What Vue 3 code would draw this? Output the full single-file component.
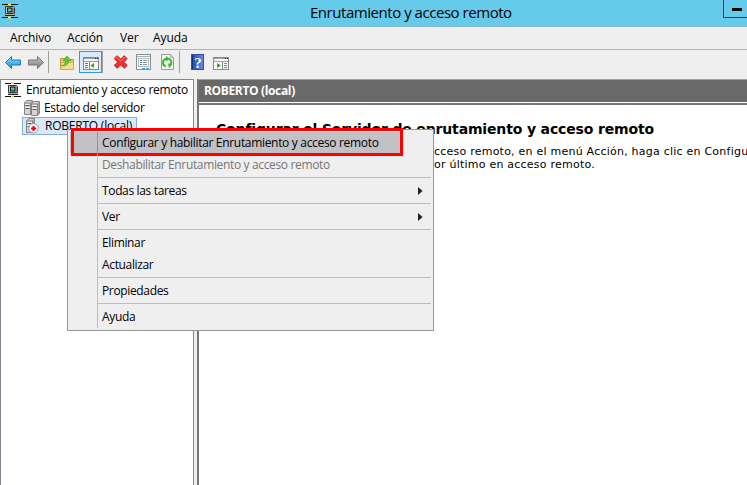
<script setup>
const menus = [
  { label: 'Archivo', cls: 'archivo' },
  { label: 'Acción', cls: 'accion' },
  { label: 'Ver', cls: 'ver' },
  { label: 'Ayuda', cls: 'ayuda' },
]
const groups = [
  [
    { label: 'Configurar y habilitar Enrutamiento y acceso remoto', active: true },
    { label: 'Deshabilitar Enrutamiento y acceso remoto', disabled: true },
  ],
  [{ label: 'Todas las tareas', sub: true }],
  [{ label: 'Ver', sub: true }],
  [{ label: 'Eliminar' }, { label: 'Actualizar' }],
  [{ label: 'Propiedades' }],
  [{ label: 'Ayuda' }],
]
</script>

<template>
  <div class="window">
    <svg width="0" height="0" class="defs">
      <defs>
        <linearGradient id="blue" x2="0" y2="1"><stop stop-color="#9be4ff" /><stop offset=".5" stop-color="#4bbcf3" /><stop offset="1" stop-color="#138bd8" /></linearGradient>
        <linearGradient id="gray" x2="0" y2="1"><stop stop-color="#c4c4c4" /><stop offset="1" stop-color="#808080" /></linearGradient>
        <linearGradient id="help"><stop stop-color="#2345a8" /><stop offset=".25" stop-color="#2f59c4" /><stop offset="1" stop-color="#688be2" /></linearGradient>
        <symbol id="net" viewBox="0 0 16 16">
          <path d="M0 1.500h16M0 14.500h16" stroke="#111" />
          <path d="M6 .5h3v2H6zM6 13.500h3v2H6z" fill="#efe23a" />
          <path d="M3.500 3.500h8l1 1v6h-9z" fill="#d4d4d4" stroke="#333" />
          <rect x="5.500" y="5" width="4.500" height="4" fill="#42c8ba" stroke="#000" />
          <path d="M11.500 4.500v6" stroke="#888" />
          <path d="M3 11.500h10" stroke="#aaa" />
          <path d="M3 12.500h10" stroke="#222" />
        </symbol>
        <symbol id="tower" viewBox="0 0 9 15">
          <path d="M.5 2.500 3 .5h5.500v12l-2 2h-6z" fill="#d5d5d5" stroke="#858585" />
          <path d="M1 3h5.500v11.500M6.500 3l2-2" fill="none" stroke="#858585" />
          <path d="M1.500 5.500h4M1.500 8.500h4" stroke="#555" />
          <path d="M1.500 4.500h4M1.500 7.500h4" stroke="#fff" />
          <path d="M7.500 3v10" stroke="#aaa" />
        </symbol>
      </defs>
    </svg>

    <header class="title">
      <svg class="title-icon" width="16" height="16"><use href="#net" /></svg>
      <span class="title-text">Enrutamiento y acceso remoto</span>
      <div class="minimize"><i></i></div>
    </header>

    <nav class="menubar">
      <span v-for="m in menus" :key="m.cls" :class="m.cls">{{ m.label }}</span>
    </nav>

    <div class="toolbar">
      <svg width="243" height="29" viewBox="0 50 243 29">
        <path d="M5.500 62.500l6-6v3.500h9v5h-9v3.500z" fill="url(#blue)" stroke="#2877a8" />
        <path d="M43.500 62.500l-6-6v3.500h-9v5h9v3.500z" fill="url(#gray)" stroke="#777" />
        <path d="M48.500 51v22M102.500 51v22M179.500 51v22" stroke="#a0a0a0" />

        <path d="M60.500 58.500h5l1 1h7v10h-13z" fill="#ecc866" stroke="#c39a43" />
        <path d="M61 62.500h12.500v7H61z" fill="#f7dc8d" stroke="#d4ad54" />
        <path d="M61.500 65.500c3 0 4-2 4-5H63l4-4.500 4 4.500h-2.500c0 4-2.500 6-7 5z" fill="#5ccc35" stroke="#3c9b25" stroke-width=".6" />

        <rect x="79.500" y="51.500" width="22" height="21" fill="#d9ebfa" stroke="#3399df" />
        <rect x="83.500" y="57.500" width="15" height="12" fill="#f7f7f7" stroke="#7e8792" />
        <path d="M84 58.500h14M84 61.500h14" stroke="#9ba4ae" />
        <path d="M95 58.500h1M97 58.500h1" stroke="#333" />
        <path d="M89.500 62v7" stroke="#7e8792" />
        <path d="M85 63.500h3M85 65.500h3M85 67.500h3" stroke="#4881b2" />
        <path d="M94 63v5l-3.500-2.500z" fill="#38a71c" />

        <path d="M115.500 57l10.500 10M126 57l-10.500 10" stroke="#c42020" stroke-width="4.800" />
        <path d="M115.500 57l10.500 10M126 57l-10.500 10" stroke="#ee3030" stroke-width="3.200" />
        <path d="M115.500 56.500l5.300 4.500 5-4.500" fill="none" stroke="#f68b7b" />

        <rect x="136.500" y="54.500" width="14" height="15" fill="#f9f9f9" stroke="#8a8f96" />
        <path d="M137 56.500h13" stroke="#a8b0b8" />
        <rect x="138.500" y="58.500" width="10" height="8" fill="#fff" stroke="#b8bcc2" />
        <path d="M140 60.500h2M140 62.500h2M140 64.500h2" stroke="#4481b6" />
        <path d="M143 60.500h4M143 62.500h4M143 64.500h4" stroke="#8d9297" />
        <path d="M142 68.500h3M146 68.500h3" stroke="#32a3df" />

        <path d="M161.500 54.500h9l3 3v12h-12z" fill="#fafafa" stroke="#999" />
        <path d="M170.500 54.500v3h3" fill="#ddd" stroke="#aaa" />
        <path d="M165.800 66.500a4 4 0 0 1 1-7.800M168.800 58.700a4 4 0 0 1 1 7" fill="none" stroke="#37b92b" stroke-width="2" />
        <path d="M166 56l4 2.700-4 2.800z" fill="#37b92b" />
        <path d="M168 63.500h4.500l-3.500 5z" fill="#37b92b" />

        <rect x="191.500" y="54.500" width="12" height="15" fill="url(#help)" stroke="#3451a0" />
        <path d="M192.500 55v14" stroke="#18327f" />
        <text x="194.200" y="67.500" class="question">?</text>

        <rect x="213.500" y="57.500" width="15" height="12" fill="#f9f9f9" stroke="#858a90" />
        <path d="M214 58.500h14M214 61.500h14" stroke="#9ba1a8" />
        <path d="M225 58.500h1M227 58.500h1" stroke="#333" />
        <path d="M222.500 62v7" stroke="#858a90" />
        <path d="M217 63v5l4-2.500z" fill="#38a71c" />
        <path d="M224 63.500h3M224 65.500h3M224 67.500h3" stroke="#858a90" />
      </svg>
    </div>

    <main class="body">
      <aside class="tree">
        <div class="node root"><svg width="16" height="16"><use href="#net" /></svg><span>Enrutamiento y acceso remoto</span></div>
        <div class="node status">
          <svg width="17" height="16"><use href="#tower" x="0" y="0" width="9" height="15" /><use href="#tower" x="7" y="1" width="9" height="15" /></svg>
          <span>Estado del servidor</span>
        </div>
        <div class="node local">
          <svg width="15" height="16">
            <use href="#tower" x="1" y="0" width="9" height="15" />
            <circle cx="8.500" cy="10.200" r="4.700" fill="#fff" stroke="#999" />
            <path d="M8.500 8v5M6 10.500h5" stroke="#e00" stroke-width="2" />
          </svg>
          <span>ROBERTO (local)</span>
        </div>
      </aside>
      <div class="splitter"></div>
      <section class="detail">
        <h2>ROBERTO (local)</h2>
        <article>
          <h1>Configurar el Servidor de enrutamiento y acceso remoto</h1>
          <p><span class="line-one">cceso remoto, en el menú Acción, haga clic en Configu</span><span class="line-two">or último en acceso remoto.</span></p>
        </article>
      </section>
    </main>

    <div class="context">
      <div v-for="(g, gi) in groups" :key="gi" class="group">
        <div v-for="item in g" :key="item.label" class="item" :class="{ active: item.active, disabled: item.disabled }">
          <span>{{ item.label }}</span>
          <svg v-if="item.sub" width="5" height="8"><path d="M0 0l4.500 4-4.500 4z" fill="#222" /></svg>
        </div>
      </div>
    </div>
    <div class="marker"></div>
  </div>
</template>

<style>
body { margin: 0; overflow: hidden; }
</style>

<style scoped>
* { box-sizing: border-box; }
.window { position: relative; width: 747px; height: 485px; overflow: hidden; display: flex; flex-direction: column; background: #efefef; color: #000; font: 12px/16px "Open Sans", sans-serif; }
.defs { position: absolute; }
svg { display: block; flex: none; }
.title { height: 27px; flex: none; display: flex; background: #66caea; border-bottom: 1px solid #8bb5c8; position: relative; }
.title-icon { margin: 3px 0 0 2px; }
.title-text { margin-left: 292px; font-size: 15px; line-height: 24px; letter-spacing: -0.46px; white-space: nowrap; }
.minimize { position: absolute; right: -1px; top: -1px; width: 25px; height: 19px; border: 1px solid #27424c; display: flex; }
.minimize i { width: 10px; height: 3px; margin: 8px 0 0 8px; background: #000; }
.menubar { height: 23px; flex: none; border-bottom: 1px solid #b3b3b7; display: flex; padding: 3px 0 0 10px; }
.menubar span { letter-spacing: -0.1px; white-space: nowrap; }
.archivo { width: 57px; }
.accion { width: 53px; }
.ver { width: 33px; }
.toolbar { height: 29px; flex: none; background: #efefef; }
.question { font: bold 15px "Liberation Serif", serif; fill: #fff; }
.body { flex: 1; min-height: 0; display: flex; }
.tree { width: 194px; flex: none; border: 1px solid #828790; border-bottom: 0; background: #fff; padding-top: 1px; }
.node { display: flex; height: 18px; align-items: center; white-space: nowrap; }
.node span { letter-spacing: -0.35px; }
.root { padding-left: 4px; gap: 5px; }
.status { padding-left: 23px; gap: 4px; }
.status span { margin-left: -1px; }
.local { margin-left: 21px; width: 115px; border: 1px solid #84acdd; background: #d9e8fb; padding-left: 2px; gap: 5px; }
.local span { letter-spacing: -0.22px; }
.splitter { width: 3px; flex: none; background: #efefef; }
.detail { flex: 1; min-width: 0; border-left: 2px solid #777; border-top: 1px solid #a0a0a0; background: #fff; }
h2 { margin: 0; height: 22px; background: #696969; color: #fff; font-size: 12px; line-height: 22px; padding-left: 5px; letter-spacing: -0.35px; }
article { margin-top: 1px; border-top: 2px solid #777; padding: 16px 0 0 17px; font-family: "DejaVu Sans", sans-serif; white-space: nowrap; }
h1 { margin: 0; font-size: 14px; line-height: 17px; letter-spacing: -0.15px; }
p { margin: 7px 0 0 218px; font-size: 11px; line-height: 13px; letter-spacing: 0.23px; }
p span { display: block; }
.context { position: absolute; left: 67px; top: 129px; width: 367px; height: 202px; padding: 2px; background: #efefef; border: 1px solid #979797; }
.group + .group { border-top: 1px solid #bdbdbd; margin: 0 0 0 27px; padding-top: 2px; position: relative; }
.group { padding-bottom: 1px; }
.context::before { content: ""; position: absolute; left: 29px; top: 2px; width: 1px; height: 196px; background: linear-gradient(#96969a 22px, #bdbdbd 22px); z-index: 1; }
.item { height: 22px; display: flex; justify-content: space-between; padding: 3px 8px 0 5px; white-space: nowrap; }
.group:first-child .item { padding-left: 32px; }
.item span { letter-spacing: -0.35px; }
.item.active span { letter-spacing: -0.32px; }
.item svg { margin-top: 4px; }
.active { background: #c1c1c6; width: 332px; }
.disabled { color: #777; }
.marker { position: absolute; left: 71px; top: 128px; width: 332px; height: 28px; border: 3px solid #f00; }
</style>
